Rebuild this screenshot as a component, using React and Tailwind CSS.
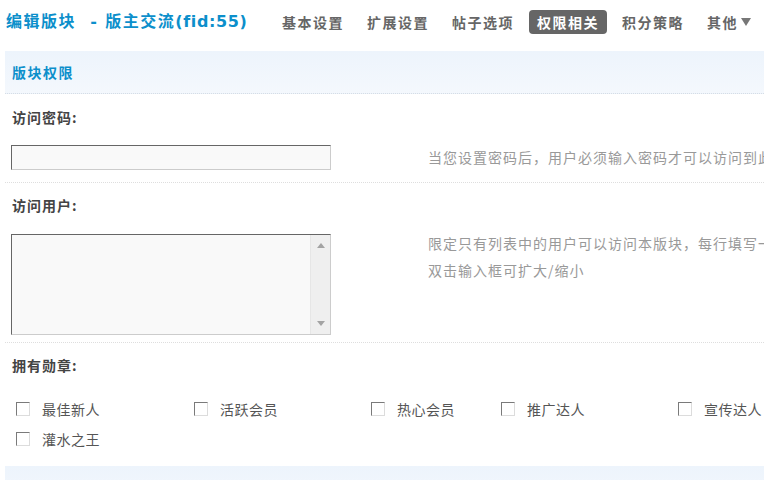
const navItems = ["基本设置", "扩展设置", "帖子选项", "权限相关", "积分策略"];

function Checkbox() {
  return (
    <span className="inline-block w-[14px] h-[14px] shrink-0 bg-white border border-t-[#7a7a7a] border-l-[#7a7a7a] border-b-[#dcdcdc] border-r-[#dcdcdc]" />
  );
}

function Medal({ label, w }) {
  return (
    <div className={`flex items-center gap-[12px] shrink-0 ${w}`}>
      <Checkbox />
      <span className="text-[14px] tracking-[0.5px] text-[#555] leading-none">{label}</span>
    </div>
  );
}

export default function App() {
  return (
    <div className="w-[764px] h-[480px] overflow-hidden bg-white font-['Noto_Sans_CJK_SC',sans-serif]">
      {/* top bar */}
      <div className="flex items-center h-[44px] pl-[6px]">
        <div className="w-[268px] shrink-0 font-['DejaVu_Sans','Noto_Sans_CJK_SC',sans-serif] font-bold text-[16px] tracking-[1.5px] text-[#0c8fcb] leading-none whitespace-nowrap">
          编辑版块&nbsp; - 版主交流<span className="tracking-[0.6px]">(fid:55)</span>
        </div>
        <nav className="flex items-center gap-[7px] shrink-0">
          {navItems.map((t) => (
            <span
              key={t}
              className={
                t === "权限相关"
                  ? "px-[8px] h-[24px] leading-[24px] rounded-[4px] bg-[#666] text-white text-[14px] font-bold tracking-[1.5px] whitespace-nowrap"
                  : "px-[8px] h-[24px] leading-[24px] text-[#666] text-[14px] font-bold tracking-[1.5px] whitespace-nowrap"
              }
            >
              {t}
            </span>
          ))}
          <span className="px-[8px] h-[24px] flex items-center gap-[3px] text-[#666] text-[14px] font-bold tracking-[1.5px] whitespace-nowrap">
            其他
            <svg width="10" height="8" viewBox="0 0 10 8">
              <path d="M0 0 H10 L5 8 Z" fill="#777" />
            </svg>
          </span>
        </nav>
      </div>

      <div className="ml-[5px] mt-[7px]">
        {/* section header */}
        <div className="h-[43px] flex items-center pl-[7px] bg-gradient-to-b from-[#edf4fc] to-[#f4f8fd] border-b border-dotted border-[#d6dde5]">
          <span className="text-[14px] font-bold tracking-[1.5px] text-[#0c8fcb] leading-none">版块权限</span>
        </div>

        {/* 访问密码 */}
        <div className="h-[46px] flex items-center pl-[7px]">
          <span className="text-[14px] font-bold tracking-[1px] text-[#444] leading-none">访问密码:</span>
        </div>
        <div className="h-[43px] flex items-start pt-[5px] border-b border-dotted border-[#dedede]">
          <div className="w-[423px] shrink-0 pl-[6px]">
            <input
              type="text"
              className="block w-[320px] h-[25px] bg-[#f9f9f9] border border-t-[#666] border-l-[#666] border-b-[#ccc] border-r-[#ccc] outline-none"
            />
          </div>
          <span className="shrink-0 text-[14px] tracking-[1px] text-[#999] leading-[25px] whitespace-nowrap">
            当您设置密码后，用户必须输入密码才可以访问到此版块
          </span>
        </div>

        {/* 访问用户 */}
        <div className="h-[44px] flex items-center pl-[7px]">
          <span className="text-[14px] font-bold tracking-[1px] text-[#444] leading-none">访问用户:</span>
        </div>
        <div className="h-[116px] flex items-start pt-[7px] border-b border-dotted border-[#dedede]">
          <div className="w-[423px] shrink-0 pl-[6px]">
            <div className="flex w-[320px] h-[101px] bg-[#f9f9f9] border border-t-[#666] border-l-[#666] border-b-[#ccc] border-r-[#ccc]">
              <textarea className="flex-1 h-full bg-transparent resize-none outline-none overflow-hidden" />
              <div className="w-[20px] h-full bg-[#efefef] border-l border-[#e6e6e6] flex flex-col items-center justify-between py-[8px]">
                <svg width="8" height="5" viewBox="0 0 8 5">
                  <path d="M0 5 L4 0 L8 5 Z" fill="#a3a3a3" />
                </svg>
                <svg width="8" height="5" viewBox="0 0 8 5">
                  <path d="M0 0 L8 0 L4 5 Z" fill="#a3a3a3" />
                </svg>
              </div>
            </div>
          </div>
          <div className="shrink-0 -mt-[4px] text-[14px] tracking-[1px] text-[#999] leading-[27px] whitespace-nowrap">
            <div>限定只有列表中的用户可以访问本版块，每行填写一个用户名</div>
            <div>双击输入框可扩大/缩小</div>
          </div>
        </div>

        {/* 拥有勋章 */}
        <div className="h-[44px] flex items-center pl-[7px]">
          <span className="text-[14px] font-bold tracking-[1px] text-[#444] leading-none">拥有勋章:</span>
        </div>
        <div className="pl-[11px] pt-[7px]">
          <div className="h-[30px] flex items-center whitespace-nowrap">
            <Medal label="最佳新人" w="w-[178px]" />
            <Medal label="活跃会员" w="w-[177px]" />
            <Medal label="热心会员" w="w-[130px]" />
            <Medal label="推广达人" w="w-[177px]" />
            <Medal label="宣传达人" w="w-[100px]" />
          </div>
          <div className="h-[30px] flex items-center">
            <Medal label="灌水之王" w="w-[178px]" />
          </div>
        </div>

        <div className="mt-[12px] h-[40px] bg-gradient-to-b from-[#edf4fc] to-[#f4f8fd]" />
      </div>
    </div>
  );
}
